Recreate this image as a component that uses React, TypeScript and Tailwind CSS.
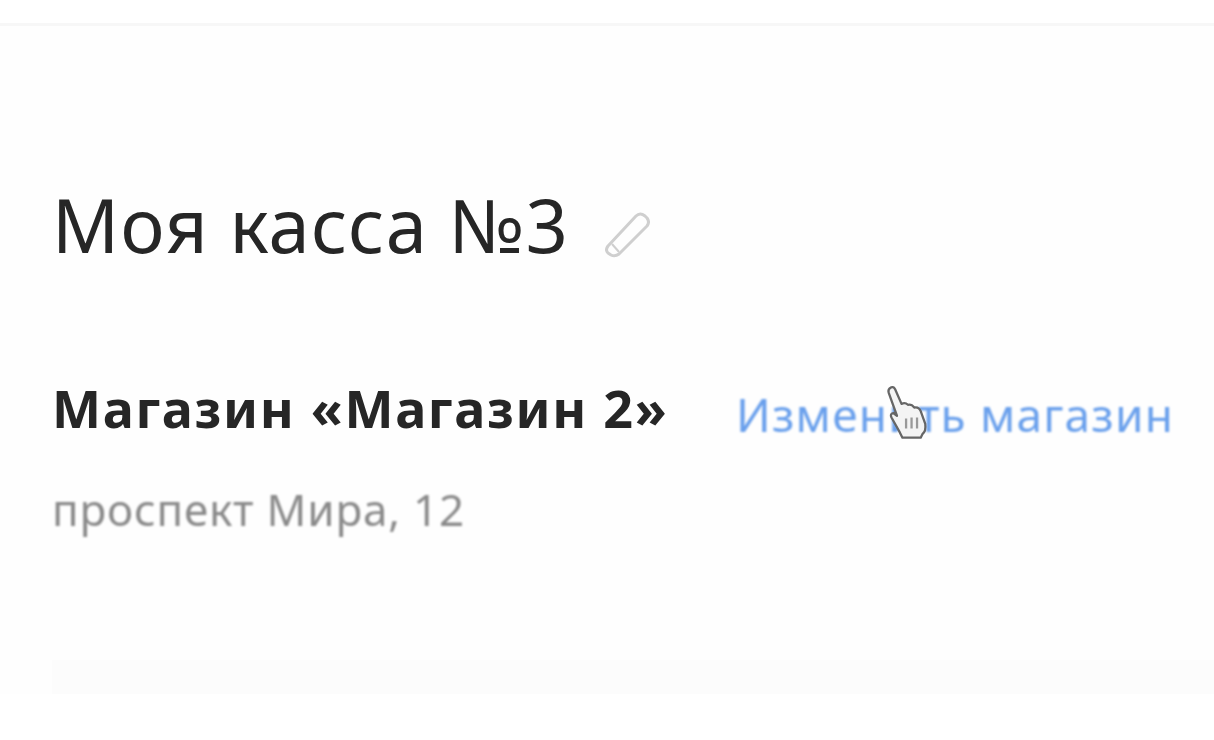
function Pencil() {
  return (
    <svg width="48" height="50" viewBox="0 0 48 50" fill="none" stroke="#cfcfcf" strokeWidth="3" strokeLinejoin="round">
      <path d="M4 36 L32 6 Q36 2 41 6 L43 8 Q46 12 43 16 L15 44 Q11 47 7 45 L4 43 Q1 40 4 36 Z" />
      <path d="M8 34 L15 42" strokeWidth="2" />
    </svg>
  )
}

function HandCursor() {
  return (
    <svg width="42" height="56" viewBox="0 0 46 60" className="absolute left-[150px] top-[1px] blur-[0.5px]">
      <path
        d="M4 3 Q8 0 10 4 L17 20 Q21 18 24 21 Q28 20 31 24 Q36 23 38 28 L43 42 Q44 50 40 53 L38 57 L18 57 L15 51 L6 35 Q4 31 8 30 L12 33 L3 8 Q2 5 4 3 Z"
        fill="#f4f4f4"
        stroke="#666"
        strokeWidth="2.5"
        strokeLinejoin="round"
      />
      <path d="M22 36 V47 M28 35 V47 M34 35 V47" stroke="#999" strokeWidth="2.5" />
    </svg>
  )
}

export default function App() {
  return (
    <div className="h-[740px] w-[1214px] overflow-hidden bg-white font-['Noto_Sans','Open_Sans',sans-serif]">
      {/* top bar */}
      <div className="h-[26px] border-b-[3px] border-[#f7f7f7] bg-white" />

      <div className="flex h-[668px] flex-col bg-[#fefefe] pl-[52px] pt-[154px]">
        <div className="flex items-center">
          <h1 className="text-[74px] leading-[90px] font-normal tracking-[1.3px] text-[#262626] blur-[0.7px]">Моя касса №3</h1>
          <div className="ml-[35px] mt-[20px] blur-[0.6px]">
            <Pencil />
          </div>
        </div>

        <div className="mt-[102px] flex items-center">
          <h2 className="w-[684px] text-[52px] leading-[70px] font-bold tracking-[1.7px] text-[#262626] blur-[0.7px]">Магазин «Магазин 2»</h2>
          <a className="relative mt-[12px] text-[46px] leading-[60px] tracking-[1.2px] text-[#6aa0ec]">
            <span className="blur-[0.8px]">Изменить магазин</span>
            <HandCursor />
          </a>
        </div>

        <p className="mt-[37px] text-[44px] leading-[56px] tracking-[0.8px] text-[#8a8a8a] blur-[0.8px]">проспект Мира, 12</p>

        {/* faint band at the bottom of the panel */}
        <div className="mt-auto h-[34px] bg-[#fcfcfc]" />
      </div>
    </div>
  )
}
